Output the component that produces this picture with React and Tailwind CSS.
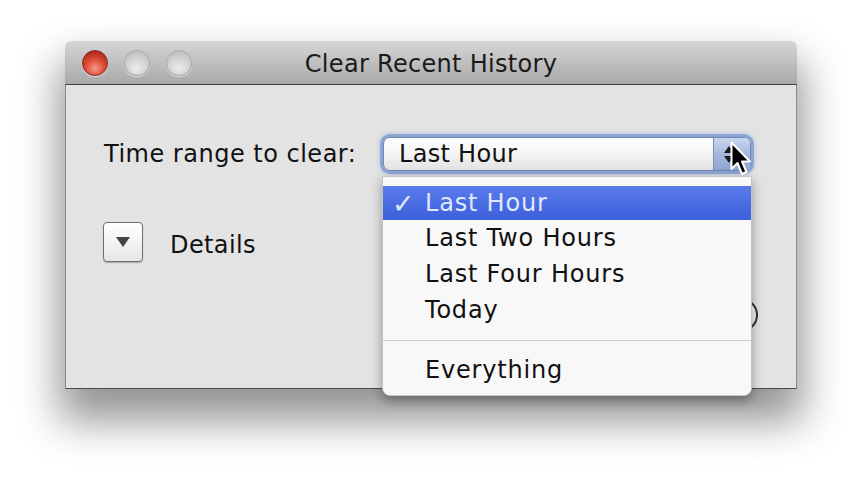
import React from "react";

const font = { fontFamily: '"DejaVu Sans", "Liberation Sans", sans-serif' };

function Light({ red }) {
  return (
    <div
      className={
        red
          ? "w-[26px] h-[26px] rounded-full border border-[#8a2a20] bg-[radial-gradient(circle_at_50%_72%,#f49a88_0%,#e0503c_40%,#b02a1c_80%,#8a1b10_100%)] shadow-[0_1px_1px_rgba(255,255,255,0.6)]"
          : "w-[26px] h-[26px] rounded-full border border-[#a8a8a8] bg-[radial-gradient(circle_at_50%_72%,#ececec_0%,#d2d2d2_50%,#b4b4b4_100%)] shadow-[0_1px_1px_rgba(255,255,255,0.6)]"
      }
    />
  );
}

export default function App() {
  return (
    <div
      className="relative w-[866px] h-[490px] overflow-hidden bg-white pl-[65px] pt-[41px] text-[#111]"
      style={font}
    >
      {/* Window */}
      <div className="w-[732px] h-[348px] flex flex-col rounded-t-[6px] shadow-[0_26px_42px_6px_rgba(0,0,0,0.42)]">
        {/* Title bar */}
        <div className="h-[44px] flex items-center rounded-t-[6px] bg-gradient-to-b from-[#d6d6d6] to-[#a9a9a9] border-b border-[#3f3f3f]">
          <div className="w-[127px] flex items-center gap-[16px] pl-[17px]">
            <Light red />
            <Light />
            <Light />
          </div>
          <div className="flex-1 text-center text-[24px] leading-none text-[#1a1a1a] tracking-[0.3px] pt-[3px]">
            Clear Recent History
          </div>
          <div className="w-[127px]" />
        </div>
        {/* Body */}
        <div className="flex-1 flex flex-col bg-[#e3e3e3] border-x border-b border-x-[#8a8a8a] border-b-[#4a4a4a] pl-[37px] pr-[39px] pt-[52px]">
          <div className="flex items-center">
            <div className="w-[280px] text-[24px] leading-none tracking-[0.5px] pl-[1px]">
              Time range to clear:
            </div>
            <div className="relative w-[368px] h-[34px] flex rounded-[7px] border border-[#6f86b0] bg-gradient-to-b from-[#ffffff] via-[#f4f4f4] to-[#e2e2e2] shadow-[0_0_0_3px_rgba(115,145,205,0.7),0_0_4px_4px_rgba(140,170,220,0.4)]">
              <div className="flex-1 flex items-center pl-[15px] text-[24px] leading-none tracking-[0.3px]">
                Last Hour
              </div>
              <div className="w-[37px] h-full rounded-r-[6px] border-l border-[#7b8fb6] bg-gradient-to-b from-[#c9d6ee] via-[#a5b8de] to-[#8ea5d2] flex flex-col items-center justify-center gap-[3px] pr-[6px]">
                <svg width="10" height="7" viewBox="0 0 10 7">
                  <path d="M5 0 L10 7 L0 7 Z" fill="#1a1a1a" />
                </svg>
                <svg width="10" height="7" viewBox="0 0 10 7">
                  <path d="M0 0 L10 0 L5 7 Z" fill="#1a1a1a" />
                </svg>
              </div>
            </div>
          </div>
          <div className="flex items-center mt-[51px]">
            <div className="w-[40px] h-[40px] rounded-[4px] border border-[#707070] bg-gradient-to-b from-[#ffffff] to-[#e6e6e6] shadow-[0_1px_1px_rgba(0,0,0,0.25)] flex items-center justify-center">
              <svg width="16" height="12" viewBox="0 0 16 12">
                <path d="M1 1 L15 1 L8 11 Z" fill="#444" />
              </svg>
            </div>
            <div className="ml-[27px] pt-[6px] text-[24px] leading-none tracking-[0.4px]">Details</div>
          </div>
          <div className="flex justify-end mt-[36px]">
            <div className="w-[170px] h-[34px] mr-[-1px] rounded-full border-2 border-[#333] bg-gradient-to-b from-white to-[#e8e8e8]" />
          </div>
        </div>
      </div>

      {/* Popup menu */}
      <div className="absolute left-[382px] top-[176px] w-[370px] h-[220px] flex flex-col pt-[9px] rounded-b-[8px] bg-[#f8f8f8] border border-[#c4c4c4] shadow-[0_5px_12px_rgba(0,0,0,0.35)] text-[24px] leading-none tracking-[0.8px]">
        <div className="h-[34px] flex items-center bg-gradient-to-b from-[#5a7bea] to-[#3c5fdb] text-[#dfe8ff]">
          <span className="w-[42px] pl-[9px] text-[27px] font-bold leading-none">✓</span>
          <span>Last Hour</span>
        </div>
        <div className="h-[36px] flex items-center pl-[42px]">Last Two Hours</div>
        <div className="h-[36px] flex items-center pl-[42px]">Last Four Hours</div>
        <div className="h-[36px] flex items-center pl-[42px]">Today</div>
        <div className="h-[24px] flex items-center">
          <div className="w-full h-px bg-[#cfcfcf]" />
        </div>
        <div className="h-[36px] flex items-center pl-[42px]">Everything</div>
      </div>

      {/* Mouse cursor */}
      <svg
        className="absolute left-[730px] top-[141px]"
        width="24"
        height="38"
        viewBox="0 0 24 38"
      >
        <path
          d="M1.5 1.5 L1.5 28 L7.5 22 L12 33 L16.5 31 L12 20.5 L20 20.5 Z"
          fill="#000"
          stroke="#fff"
          strokeWidth="2"
          strokeLinejoin="round"
        />
      </svg>
    </div>
  );
}
